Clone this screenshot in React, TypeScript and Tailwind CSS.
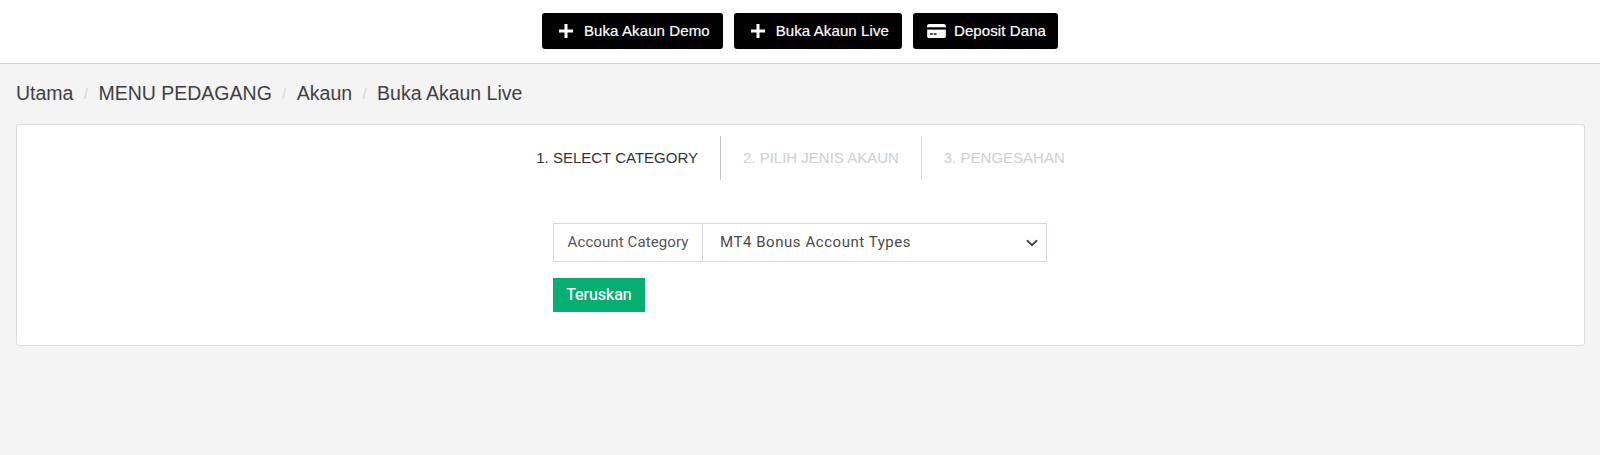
import { ChevronDown } from 'lucide-react';

const crumbs = ['Utama', 'MENU PEDAGANG', 'Akaun', 'Buka Akaun Live'];

function PlusIcon() {
  return (
    <svg width="16" height="16" viewBox="0 0 16 16" className="shrink-0 mr-[10px]">
      <path d="M6.5 1h3v5.5H15v3H9.5V15h-3V9.5H1v-3h5.5z" fill="#fff" />
    </svg>
  );
}

function CardIcon() {
  return (
    <svg width="19" height="14" viewBox="0 0 20 15" className="shrink-0 mr-[8px]">
      <rect x="0" y="0" width="20" height="15" rx="2" fill="#fff" />
      <rect x="0" y="3.5" width="20" height="2.5" fill="#000" />
      <rect x="3" y="10" width="3" height="1.5" fill="#000" />
      <rect x="7" y="10" width="3" height="1.5" fill="#000" />
    </svg>
  );
}

const btn = 'h-[36px] bg-black text-white rounded-[3px] flex items-center text-[15px] tracking-[0.1px] [-webkit-text-stroke:0.2px_white]';

export default function App() {
  return (
    <div className="min-h-[455px] bg-[#f4f4f4] font-['Liberation_Sans',sans-serif] text-[#3a3a3a]">
      <header className="h-[64px] bg-white border-b border-[#d0d0d0] flex justify-center pt-[13px] gap-[11px]">
        <button className={`${btn} pl-[16px] pr-[13px]`}><PlusIcon />Buka Akaun Demo</button>
        <button className={`${btn} pl-[16px] pr-[13px]`}><PlusIcon />Buka Akaun Live</button>
        <button className={`${btn} pl-[14px] pr-[12px]`}><CardIcon />Deposit Dana</button>
      </header>

      <div className="pl-[16px] pr-[15px]">
        <nav className="h-[60px] flex items-center text-[19.5px] text-[#3f3f46]">
          {crumbs.map((c, i) => (
            <span key={c} className="flex items-center">
              {i > 0 && <span className="w-[25px] text-center text-[#d4d4d4] text-[14px]">/</span>}
              {c}
            </span>
          ))}
        </nav>

        <section className="h-[222px] bg-white border border-[#dcdce4] rounded-[3px] pt-[11px]">
          <div className="flex justify-center text-[15px]">
            <div className="h-[44px] flex items-center px-[22px] text-[#333] border-r border-[#c4c4c4]">1. SELECT CATEGORY</div>
            <div className="h-[44px] flex items-center px-[22px] text-[#cfcfcf] border-r border-[#dcdcdc]">2. PILIH JENIS AKAUN</div>
            <div className="h-[44px] flex items-center px-[22px] text-[#cfcfcf]">3. PENGESAHAN</div>
          </div>

          <div className="flex justify-center pr-[1px] mt-[43px] font-['Roboto',sans-serif]">
            <div className="w-[494px]">
              <div className="h-[39px] flex border border-[#d8d8e2]">
                <div className="w-[149px] flex items-center justify-center border-r border-[#d8d8e2] text-[#555] text-[15px] tracking-[0.1px]">Account Category</div>
                <div className="flex-1 flex items-center justify-between pl-[17px] pr-[5px] text-[#4a4a4a] text-[15px] tracking-[0.55px]">
                  MT4 Bonus Account Types
                  <ChevronDown className="w-[18px] h-[18px]" strokeWidth={2.5} />
                </div>
              </div>
              <button className="mt-[16px] h-[34px] w-[92px] bg-[#07ae72] text-white text-[16px] font-normal [-webkit-text-stroke:0.2px_white]">Teruskan</button>
            </div>
          </div>
        </section>
      </div>
    </div>
  );
}
